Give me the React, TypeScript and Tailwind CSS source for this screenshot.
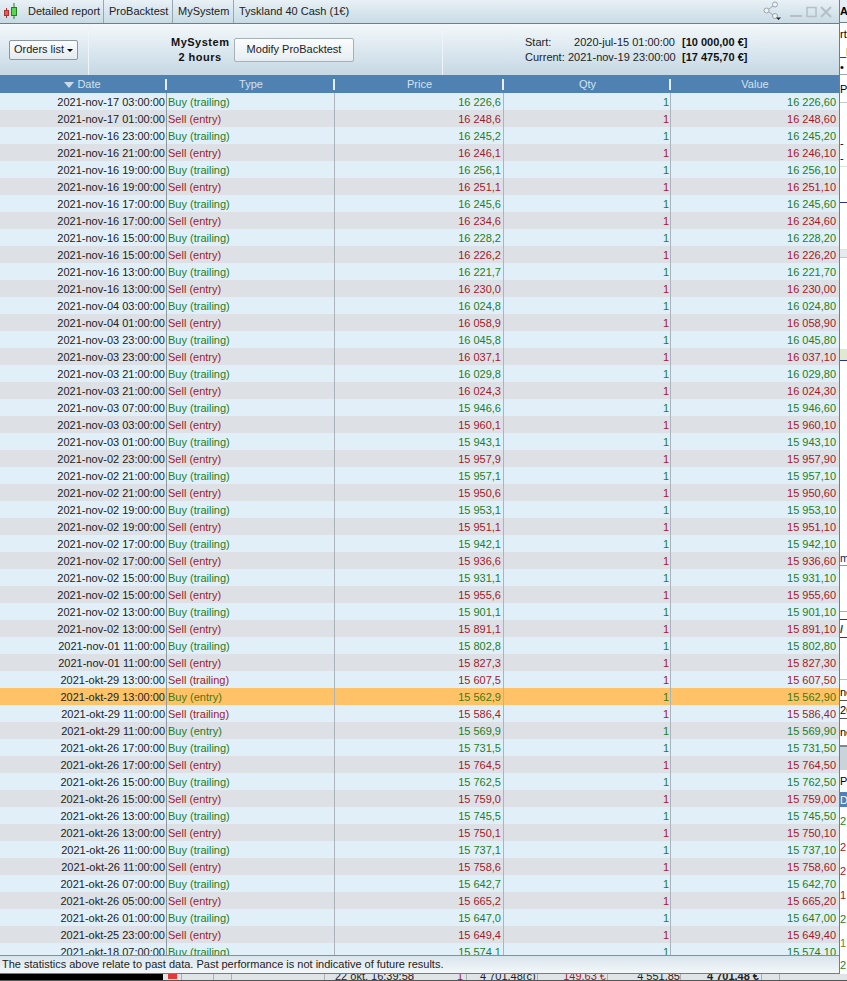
const orders: [string, string, string][] = [
  ['2021-nov-17 03:00:00', 'Buy (trailing)', '16 226,6'],
  ['2021-nov-17 01:00:00', 'Sell (entry)', '16 248,6'],
  ['2021-nov-16 23:00:00', 'Buy (trailing)', '16 245,2'],
  ['2021-nov-16 21:00:00', 'Sell (entry)', '16 246,1'],
  ['2021-nov-16 19:00:00', 'Buy (trailing)', '16 256,1'],
  ['2021-nov-16 19:00:00', 'Sell (entry)', '16 251,1'],
  ['2021-nov-16 17:00:00', 'Buy (trailing)', '16 245,6'],
  ['2021-nov-16 17:00:00', 'Sell (entry)', '16 234,6'],
  ['2021-nov-16 15:00:00', 'Buy (trailing)', '16 228,2'],
  ['2021-nov-16 15:00:00', 'Sell (entry)', '16 226,2'],
  ['2021-nov-16 13:00:00', 'Buy (trailing)', '16 221,7'],
  ['2021-nov-16 13:00:00', 'Sell (entry)', '16 230,0'],
  ['2021-nov-04 03:00:00', 'Buy (trailing)', '16 024,8'],
  ['2021-nov-04 01:00:00', 'Sell (entry)', '16 058,9'],
  ['2021-nov-03 23:00:00', 'Buy (trailing)', '16 045,8'],
  ['2021-nov-03 23:00:00', 'Sell (entry)', '16 037,1'],
  ['2021-nov-03 21:00:00', 'Buy (trailing)', '16 029,8'],
  ['2021-nov-03 21:00:00', 'Sell (entry)', '16 024,3'],
  ['2021-nov-03 07:00:00', 'Buy (trailing)', '15 946,6'],
  ['2021-nov-03 03:00:00', 'Sell (entry)', '15 960,1'],
  ['2021-nov-03 01:00:00', 'Buy (trailing)', '15 943,1'],
  ['2021-nov-02 23:00:00', 'Sell (entry)', '15 957,9'],
  ['2021-nov-02 21:00:00', 'Buy (trailing)', '15 957,1'],
  ['2021-nov-02 21:00:00', 'Sell (entry)', '15 950,6'],
  ['2021-nov-02 19:00:00', 'Buy (trailing)', '15 953,1'],
  ['2021-nov-02 19:00:00', 'Sell (entry)', '15 951,1'],
  ['2021-nov-02 17:00:00', 'Buy (trailing)', '15 942,1'],
  ['2021-nov-02 17:00:00', 'Sell (entry)', '15 936,6'],
  ['2021-nov-02 15:00:00', 'Buy (trailing)', '15 931,1'],
  ['2021-nov-02 15:00:00', 'Sell (entry)', '15 955,6'],
  ['2021-nov-02 13:00:00', 'Buy (trailing)', '15 901,1'],
  ['2021-nov-02 13:00:00', 'Sell (entry)', '15 891,1'],
  ['2021-nov-01 11:00:00', 'Buy (trailing)', '15 802,8'],
  ['2021-nov-01 11:00:00', 'Sell (entry)', '15 827,3'],
  ['2021-okt-29 13:00:00', 'Sell (trailing)', '15 607,5'],
  ['2021-okt-29 13:00:00', 'Buy (entry)', '15 562,9'],
  ['2021-okt-29 11:00:00', 'Sell (trailing)', '15 586,4'],
  ['2021-okt-29 11:00:00', 'Buy (entry)', '15 569,9'],
  ['2021-okt-26 17:00:00', 'Buy (trailing)', '15 731,5'],
  ['2021-okt-26 17:00:00', 'Sell (entry)', '15 764,5'],
  ['2021-okt-26 15:00:00', 'Buy (trailing)', '15 762,5'],
  ['2021-okt-26 15:00:00', 'Sell (entry)', '15 759,0'],
  ['2021-okt-26 13:00:00', 'Buy (trailing)', '15 745,5'],
  ['2021-okt-26 13:00:00', 'Sell (entry)', '15 750,1'],
  ['2021-okt-26 11:00:00', 'Buy (trailing)', '15 737,1'],
  ['2021-okt-26 11:00:00', 'Sell (entry)', '15 758,6'],
  ['2021-okt-26 07:00:00', 'Buy (trailing)', '15 642,7'],
  ['2021-okt-26 05:00:00', 'Sell (entry)', '15 665,2'],
  ['2021-okt-26 01:00:00', 'Buy (trailing)', '15 647,0'],
  ['2021-okt-25 23:00:00', 'Sell (entry)', '15 649,4'],
  ['2021-okt-18 07:00:00', 'Buy (trailing)', '15 574,1'],
]

// what shows of the window behind, top to bottom: height, text, classes
const behind: [number, string, string][] = [
  [23, 'AC', 'bg-[#e4eef3] font-bold text-black border-b border-[#6d7f8a]'],
  [21, 'rt', 'bg-white text-black'],
  [16, '_F', 'bg-white text-black'],
  [15, '•', 'bg-white text-black border-b border-[#9aa5ab]'],
  [28, 'Po', 'bg-white text-black border-b border-[#c3c9cd]'],
  [47, '- E', 'bg-white text-black items-end'],
  [17, '- F', 'bg-white text-black border-b border-[#dde1e4]'],
  [36, '', 'bg-white border-b border-[#2f2f9a]'],
  [47, '', 'bg-white border-b border-[#dde1e4]'],
  [8, '', 'bg-[#e6eaec] border-b border-[#c3c9cd]'],
  [91, '', 'bg-white'],
  [12, '', 'bg-[#dfe8d0] border-b border-[#2f2f9a]'],
  [189, '', 'bg-white'],
  [16, 'm', 'bg-white text-[#1a1a5a] border-b border-[#8f969b]'],
  [46, '', 'bg-white border-b border-[#a8afb3]'],
  [8, '', 'bg-white border-b border-[#2f2f9a]'],
  [18, '/', 'bg-white font-bold text-[#333] border-b border-[#2f2f9a]'],
  [42, '', 'bg-white border-b border-[#b9c0c4]'],
  [4, '', 'bg-white'],
  [17, 'nc', 'bg-white text-black border-b border-[#555]'],
  [18, '26', 'bg-white text-black border-b border-[#555]'],
  [26, 'nc', 'bg-white text-black'],
  [25, '', 'bg-[#c8d3da] border-t-2 border-[#7d8990]'],
  [22, 'P', 'bg-white text-black'],
  [15, 'D', 'bg-[#4f82b3] text-white'],
  [28, '2', 'bg-white text-[#1e7e1e]'],
  [24, '2', 'bg-white text-[#a01a2a]'],
  [24, '2', 'bg-white text-[#a01a2a]'],
  [24, '1', 'bg-white text-[#a01a2a]'],
  [24, '2', 'bg-white text-[#1e7e1e]'],
  [24, '1', 'bg-white text-[#6f7f2a]'],
  [19, '2', 'bg-white text-[#1e7e1e]'],
]

function Candles() {
  return (
    <svg width="18" height="20" viewBox="0 0 18 20" className="ml-[2px] shrink-0">
      <path d="M4.5 6v10" stroke="#a33" fill="none" />
      <rect x="2.5" y="8.5" width="4" height="5" fill="#f0555a" stroke="#a33" />
      <path d="M12 1v16" stroke="#2a7a2a" fill="none" />
      <rect x="9.5" y="5.5" width="5" height="8" fill="#58d850" stroke="#2a7a2a" />
    </svg>
  )
}

function TitleIcons() {
  return (
    <div className="ml-auto flex items-center pr-[7px]">
      <svg width="20" height="20" viewBox="0 0 20 20" fill="none" stroke="#9aa4aa" className="mr-[7px] -mt-[2px]">
        <circle cx="3.5" cy="9.5" r="2.5" fill="#eef3f6" />
        <circle cx="12" cy="3.5" r="2.5" fill="#eef3f6" />
        <circle cx="12" cy="15" r="2.5" fill="#eef3f6" />
        <path d="M6 8l4-3M6 11l4 3" />
        <path d="M13 16.5h5l-2.5 2.5z" fill="#222" stroke="none" />
      </svg>
      <svg width="12" height="12" viewBox="0 0 12 12" className="mr-[4px]">
        <rect x="0" y="9" width="12" height="2" fill="#b4bfc6" />
      </svg>
      <svg width="12" height="12" viewBox="0 0 12 12" fill="none" stroke="#b4bfc6" strokeWidth="1.5" className="mr-[2px]">
        <rect x="1" y="1.5" width="9" height="9" />
      </svg>
      <svg width="12" height="12" viewBox="0 0 12 12" fill="none" stroke="#b4bfc6" strokeWidth="2">
        <path d="M1 1l10 10M11 1L1 11" />
      </svg>
    </div>
  )
}

function OrderRow({ row, index }: { row: [string, string, string]; index: number }) {
  const [date, type, price] = row
  const buy = type.startsWith('Buy')
  const highlighted = date === '2021-okt-29 13:00:00' && buy
  const color = highlighted ? 'text-[#3f7a10]' : buy ? 'text-[#1e7e1e]' : 'text-[#a01a2a]'
  const bg = highlighted ? 'bg-[#ffc266]' : index % 2 === 0 ? 'bg-[#e1f0f8]' : 'bg-[#dde1e6]'
  return (
    <div className={`grid h-[17px] shrink-0 grid-cols-[167px_168px_169px_167px_1fr] leading-[17px] ${bg}`}>
      <div className="h-[17px] overflow-hidden border-r border-[#8d9aa3] pt-[1px] pr-[1px] text-right text-[#222]">{date}</div>
      <div className={`h-[17px] overflow-hidden border-r border-[#aab4ba] pt-[1px] pl-[1px] ${color}`}>{type}</div>
      <div className={`h-[17px] overflow-hidden border-r border-[#aab4ba] pt-[1px] pr-[2px] text-right ${color}`}>{price}</div>
      <div className={`h-[17px] overflow-hidden border-r border-[#aab4ba] pt-[1px] pr-[1px] text-right ${color}`}>1</div>
      <div className={`h-[17px] overflow-hidden pt-[1px] pr-[3px] text-right ${color}`}>{price}0</div>
    </div>
  )
}

export default function App() {
  return (
    <div className="flex h-[981px] w-[847px] flex-col overflow-hidden bg-white text-[11px] [font-family:'Liberation_Sans',Arial,sans-serif]">
      <div className="flex h-[974px]">
        <div className="flex w-[840px] flex-col border-r border-b border-[#6d7f8a]">
          {/* title bar */}
          <div className="flex h-[24px] shrink-0 items-center whitespace-nowrap border-b border-[#6d7f8a] bg-gradient-to-b from-[#e8f1f5] to-[#c9dbe5] text-[#222]">
            <Candles />
            <div className="flex h-full w-[84px] items-center border-r border-[#98a8b2] pl-[8px]">Detailed report</div>
            <div className="flex h-full w-[69px] items-center border-r border-[#98a8b2] pl-[5px]">ProBacktest</div>
            <div className="flex h-full w-[61px] items-center border-r border-[#98a8b2] pl-[5px]">MySystem</div>
            <div className="flex h-full items-center pl-[5px]">Tyskland 40 Cash (1€)</div>
            <TitleIcons />
          </div>

          {/* toolbar */}
          <div className="flex h-[51px] shrink-0 bg-gradient-to-b from-[#f3f8fa] to-[#c5d8e4] text-[#222]">
            <div className="flex w-[89px] items-center border-r border-[#eef4f7] pl-[9px]">
              <div className="flex h-[20px] w-[69px] items-center justify-center gap-[3px] rounded-[2px] border border-[#8b969d] bg-gradient-to-b from-[#fafcfd] to-[#e4ebef]">
                Orders list
                <span className="mt-[1px] border-x-[3px] border-t-[3px] border-x-transparent border-t-black" />
              </div>
            </div>
            <div className="flex w-[354px] items-center border-r border-[#eef4f7] pl-[82px]">
              <div className="w-[58px] text-center font-bold leading-[15px] tracking-[0.5px] text-[#111]">
                <div>MySystem</div>
                <div>2 hours</div>
              </div>
              <div className="ml-[5px] flex h-[24px] w-[120px] items-center justify-center rounded-[2px] border border-[#a5b0b7] bg-gradient-to-b from-[#fbfdfe] to-[#e6edf1]">
                Modify ProBacktest
              </div>
            </div>
            <div className="flex flex-col justify-center whitespace-nowrap pl-[82px] leading-[15px]">
              <div className="flex">
                <span className="w-[43px]">Start:</span>
                <span className="w-[107px] text-right">2020-jul-15 01:00:00</span>
                <span className="ml-[7px] font-bold text-[#111]">[10 000,00 €]</span>
              </div>
              <div className="flex">
                <span className="w-[43px]">Current:</span>
                <span className="w-[107px] text-right">2021-nov-19 23:00:00</span>
                <span className="ml-[7px] font-bold text-[#111]">[17 475,70 €]</span>
              </div>
            </div>
          </div>

          {/* column headers */}
          <div className="grid h-[18px] shrink-0 grid-cols-[167px_168px_169px_167px_1fr] items-center bg-[#4f82b3] text-center text-[#d3e2ee]">
            <div className="flex h-[11px] items-center justify-center gap-[3px] border-r-2 border-[#e6eff6] pr-[2px]">
              <span className="mt-[1px] ml-[2px] border-x-[5px] border-t-[6px] border-x-transparent border-t-[#c9dbe9]" />
              Date
            </div>
            <div className="flex h-[11px] items-center justify-center border-r-2 border-[#e6eff6] pl-[2px]">Type</div>
            <div className="flex h-[11px] items-center justify-center border-r-2 border-[#e6eff6] pl-[2px]">Price</div>
            <div className="flex h-[11px] items-center justify-center border-r-2 border-[#e6eff6] pl-[2px]">Qty</div>
            <div>Value</div>
          </div>

          {/* rows, the last one is cut by the footer */}
          <div className="flex min-h-0 flex-1 flex-col overflow-hidden">
            {orders.map((row, i) => (
              <OrderRow key={i} row={row} index={i} />
            ))}
          </div>

          <div className="flex h-[18px] shrink-0 items-center border-t border-[#7f929e] bg-gradient-to-b from-[#d8e5ec] to-[#f3f7f9] pl-[2px] text-[#222]">
            The statistics above relate to past data. Past performance is not indicative of future results.
          </div>
        </div>

        {/* sliver of the window behind */}
        <div className="flex w-[7px] flex-col overflow-hidden">
          {behind.map(([h, text, cls], i) => (
            <div
              key={i}
              style={{ height: h }}
              className={`flex shrink-0 items-center overflow-hidden whitespace-nowrap leading-[14px] ${cls}`}
            >
              {text}
            </div>
          ))}
        </div>
      </div>

      {/* bottom edge of the window behind, text cut off by the top window */}
      <div className="flex h-[7px] shrink-0 overflow-hidden whitespace-nowrap border-b border-[#555] bg-[#dfe4e7] leading-[11px] text-[#222]">
        <div className="w-[163px] bg-black" />
        <div className="w-[19px] border-r border-[#aab0b4] pl-[5px]">
          <div className="h-[5px] w-[9px] bg-[#e23a3a]" />
        </div>
        <div className="w-[32px] border-r border-[#aab0b4]" />
        <div className="w-[18px] border-r border-[#aab0b4]" />
        <div className="w-[93px] border-r border-[#aab0b4]" />
        <div className="-mt-[3px] h-[11px] w-[89px] border-r border-[#aab0b4] pl-[10px]">22 okt. 16:39:58</div>
        <div className="-mt-[3px] h-[11px] w-[53px] border-r border-[#aab0b4] pr-[3px] text-right text-[#a01a2a]">1</div>
        <div className="-mt-[3px] h-[11px] w-[71px] border-r border-[#aab0b4] pl-[13px]">4 701,48(c)</div>
        <div className="-mt-[3px] h-[11px] w-[70px] border-r border-[#aab0b4] pr-[1px] text-right text-[#a01a2a]">149,63 €</div>
        <div className="-mt-[3px] h-[11px] w-[73px] border-r border-[#aab0b4] text-right">4 551,85</div>
        <div className="-mt-[3px] h-[11px] w-[81px] border-r border-[#aab0b4] pr-[2px] text-right font-bold">4 701,48 €</div>
        <div className="w-[18px] border-r border-[#aab0b4]" />
      </div>
    </div>
  )
}
